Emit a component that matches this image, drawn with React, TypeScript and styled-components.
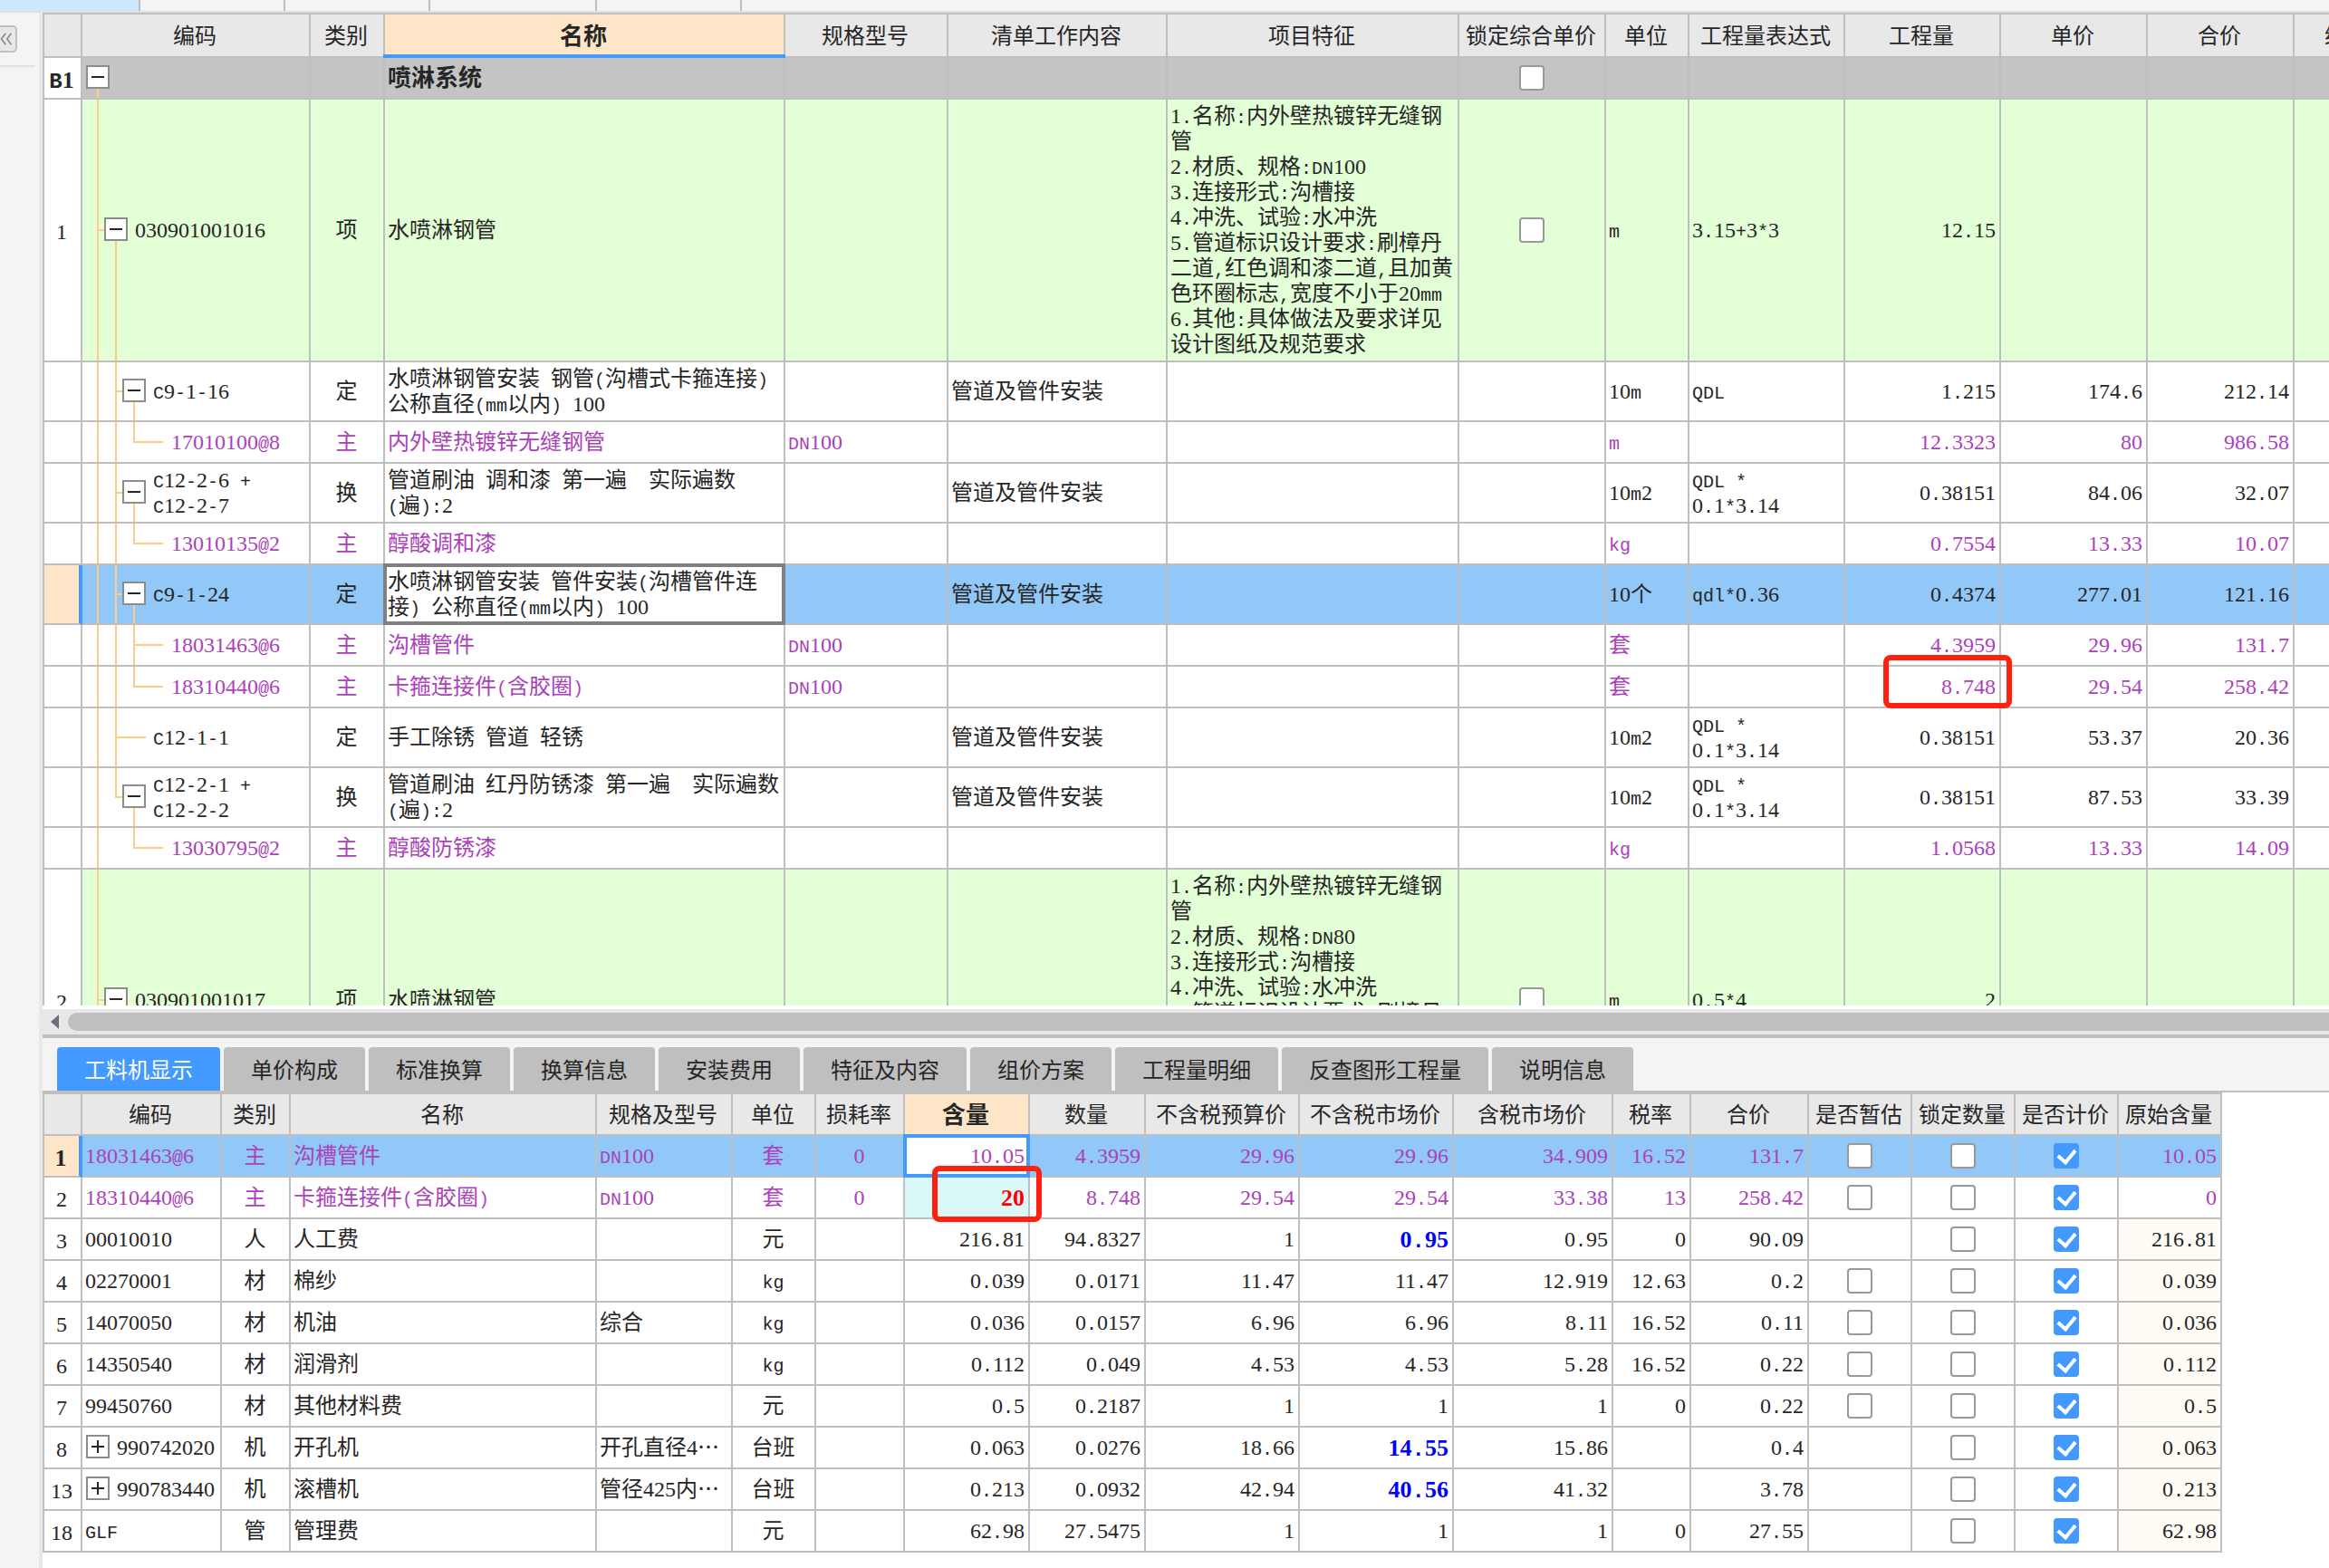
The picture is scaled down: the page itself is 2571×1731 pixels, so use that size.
import React from "react";
import styled, { createGlobalStyle, css } from "styled-components";

const c = {
  line: "#bfbfbf",
  soft: "#e0e0e0",
  panel: "#f4f4f4",
  head: "#e8e8e8",
  peach: "#ffe6c8",
  blue: "#4499ff",
  selected: "#92c8f7",
  green: "#e2ffd6",
  group: "#c4c4c4",
  purple: "#aa42ba",
  text: "#262626",
  guide: "#ffcc85",
  red: "#ff2010",
};

const GlobalStyle = createGlobalStyle`
  * { box-sizing: border-box; }
  body { margin: 0; background: #fff; overflow: hidden; }
  button { font: inherit; color: inherit; }
`;

const Page = styled.div`
  display: flex;
  flex-direction: column;
  height: 100vh;
  color: ${c.text};
  font: 24px/28px "Noto Sans CJK SC", sans-serif;
`;

/* ---------- frame ---------- */

const TopStrip = styled.div`
  display: flex;
  flex: none;
  height: 14px;
  background: ${c.panel};
  border-bottom: 2px solid ${c.soft};
`;

const StripTab = styled.div<{ $width: number; $active?: boolean }>`
  width: ${(p) => p.$width}px;
  border-right: 2px solid ${c.line};
  background: ${(p) => (p.$active ? "#cce8ff" : "transparent")};
`;

const Body = styled.div`
  display: flex;
  flex: 1;
  min-height: 0;
`;

const Rail = styled.aside`
  flex: none;
  width: 47px;
  background: ${c.panel};
  border-right: 4px solid ${c.head};
`;

const RailTop = styled.div`
  width: 39px;
  height: 60px;
  padding-top: 14px;
  border-bottom: 2px solid ${c.soft};
`;

const CollapseButton = styled.button`
  display: flex;
  align-items: center;
  justify-content: flex-end;
  width: 19px;
  height: 30px;
  padding: 0 3px 0 0;
  overflow: hidden;
  background: ${c.head};
  border: 2px solid ${c.line};
  border-left: 0;
  border-radius: 0 5px 5px 0;
`;

const Main = styled.main`
  display: flex;
  flex: 1;
  flex-direction: column;
  min-width: 0;
`;

const BillPane = styled.section`
  flex: 1;
  min-height: 0;
  overflow: hidden;
  border-bottom: 4px solid #fff;
`;

const ScrollBar = styled.div`
  display: flex;
  flex: none;
  align-items: center;
  gap: 10px;
  height: 32px;
  padding-left: 9px;
  overflow: hidden;
  background: ${c.head};
  border-bottom: 4px solid ${c.line};
`;

const ScrollArrow = styled.button`
  flex: none;
  width: 9px;
  height: 16px;
  padding: 0;
  border: 0;
  background: #6e6e78;
  clip-path: polygon(100% 0, 100% 100%, 0 50%);
`;

const ScrollThumb = styled.div`
  flex: 1;
  height: 20px;
  background: ${c.line};
  border-radius: 10px 0 0 10px;
`;

const DetailPane = styled.section`
  flex: none;
  padding: 10px 0 17px;
  overflow: hidden;
  background: linear-gradient(${c.panel} 60px, #fff 60px);
`;

const TabList = styled.div`
  display: flex;
  gap: 4px;
  padding-left: 16px;
  border-bottom: 2px solid ${c.line};
`;

const Tab = styled.button<{ $active: boolean }>`
  height: 48px;
  padding: 0 30px;
  border: 0;
  border-radius: 4px 4px 0 0;
  white-space: nowrap;
  color: ${(p) => (p.$active ? "#fff" : c.text)};
  background: ${(p) => (p.$active ? c.blue : c.line)};
`;

/* ---------- grid ---------- */

const Grid = styled.table`
  width: 0;
  table-layout: fixed;
  border-collapse: separate;
  border-spacing: 0;
  border-left: 2px solid ${c.line};
  border-top: 2px solid ${c.line};
`;

const HeadCell = styled.th<{ $active?: boolean; $rule?: boolean; $height: number }>`
  position: relative;
  height: ${(p) => p.$height}px;
  padding: 0 2px 2px 0;
  white-space: nowrap;
  font-size: ${(p) => (p.$active ? 26 : 24)}px;
  font-weight: ${(p) => (p.$active ? 700 : 400)};
  background: ${(p) => (p.$active ? c.peach : c.head)};
  border-right: 2px solid ${c.line};
  border-bottom: 2px solid ${c.line};
  ${(p) =>
    p.$rule &&
    css`
      &::after {
        content: "";
        position: absolute;
        inset: auto -2px -2px;
        height: 4px;
        background: ${c.blue};
      }
    `}
`;

type Tone = "group" | "item" | "plain" | "main" | "selected" | "selectedMain";

const rowBack: Record<Tone, string> = {
  group: c.group,
  item: c.green,
  plain: "#fff",
  main: "#fff",
  selected: c.selected,
  selectedMain: c.selected,
};

const Row = styled.tr<{ $tone: Tone; $height: number }>`
  height: ${(p) => p.$height}px;
  background-color: ${(p) => rowBack[p.$tone]};
  color: ${(p) => (p.$tone === "main" || p.$tone === "selectedMain" ? c.purple : c.text)};
`;

const RowHead = styled.th<{ $current?: boolean; $bold?: boolean }>`
  padding: 0 2px 0 0;
  color: ${c.text};
  font-size: ${(p) => (p.$bold ? 26 : 24)}px;
  font-weight: ${(p) => (p.$bold ? 700 : 400)};
  background: ${(p) => (p.$current ? c.peach : "#fff")};
  border-right: ${(p) => (p.$current ? `4px solid ${c.blue}` : `2px solid ${c.line}`)};
  border-bottom: 2px solid ${c.line};
`;

type Align = "left" | "center" | "right";

const Cell = styled.td<{
  $align?: Align;
  $back?: string;
  $ink?: string;
  $bold?: boolean;
  $focus?: string;
  $top?: boolean;
}>`
  position: relative;
  padding: 2px 4px 6px 3px;
  white-space: pre;
  vertical-align: ${(p) => (p.$top ? "top" : "middle")};
  text-align: ${(p) => p.$align || "left"};
  border-right: 2px solid ${c.line};
  border-bottom: 2px solid ${c.line};
  ${(p) => p.$back && `background-color: ${p.$back};`}
  ${(p) => p.$ink && `color: ${p.$ink};`}
  ${(p) => p.$bold && "font-size: 26px; font-weight: 700;"}
  ${(p) =>
    p.$focus &&
    css`
      background-color: #fff;
      &::after {
        content: "";
        position: absolute;
        inset: -2px;
        border: 4px solid ${p.$focus};
      }
    `}
`;

const CheckCell = styled(Cell)`
  padding: 0;
  line-height: 0;
`;

const Guided = styled(Cell)<{ $layers: string }>`
  padding-left: 0;
  padding-right: 0;
  background: ${(p) => p.$layers};
`;

const CodeBox = styled.div<{ $indent: number }>`
  display: flex;
  align-items: center;
  gap: 8px;
  padding-left: ${(p) => p.$indent}px;
`;

const Toggle = styled.button<{ $open: boolean }>`
  flex: none;
  width: 26px;
  height: 26px;
  margin: 2px 0 0;
  padding: 0;
  border: 2px solid #8c8c8c;
  background: linear-gradient(${c.text}, ${c.text}) center / 14px 2px no-repeat,
    ${(p) => (p.$open ? "" : `linear-gradient(${c.text}, ${c.text}) center / 2px 14px no-repeat,`)}
    #fff;
`;

const Check = styled.input`
  appearance: none;
  display: inline-grid;
  place-items: center;
  width: 28px;
  height: 28px;
  margin: 0;
  background: #fff;
  border: 2px solid #999;
  border-radius: 4px;
  &:checked {
    background: ${c.blue};
    border-color: ${c.blue};
  }
  &:checked::after {
    content: "";
    width: 9px;
    height: 15px;
    margin-bottom: 4px;
    border: solid #fff;
    border-width: 0 4px 4px 0;
    transform: rotate(40deg);
  }
`;

const Mark = styled.span<{ $inset: string }>`
  position: absolute;
  z-index: 1;
  inset: ${(p) => p.$inset};
  border: 6px solid ${c.red};
  border-radius: 8px;
  pointer-events: none;
`;

/* Digits and Latin signs take half the width of a Chinese character. */
const Digits = styled.span`
  font-family: "Liberation Serif", serif;
  line-height: 0;
`;

const Latin = styled.span<{ $bold?: boolean }>`
  font-family: "Liberation Mono", monospace;
  font-size: ${(p) => (p.$bold ? 24 : 20)}px;
  line-height: 0;
`;

function Text({ value, bold }: { value: string; bold?: boolean }) {
  const runs = value.match(/\d+|\n|[\x20-\x2f\x3a-\x7e]+|[^\x00-\x7e]+/g) || [];
  return (
    <>
      {runs.map((run, i) => {
        if (/^\d/.test(run)) return <Digits key={i}>{run}</Digits>;
        if (/^[\x20-\x7e]/.test(run)) return <Latin key={i} $bold={bold}>{run}</Latin>;
        return <React.Fragment key={i}>{run}</React.Fragment>;
      })}
    </>
  );
}

/* ---------- tree guides ---------- */

type Part = "full" | "top" | "bottom";
type Guide = [number, Part];

function guideLayers(guides: Guide[], stub?: [number, number]) {
  const ink = `linear-gradient(${c.guide}, ${c.guide})`;
  const layers = guides.map(([level, part]) => {
    const x = 16 + level * 20;
    const y = part === "bottom" ? "100%" : "0";
    return `${ink} ${x}px ${y} / 2px ${part === "full" ? "100%" : "50%"} no-repeat`;
  });
  if (stub) layers.push(`${ink} ${16 + stub[0] * 20}px 50% / ${stub[1]}px 2px no-repeat`);
  return layers.join(", ");
}

interface Bill {
  no?: string;
  code?: string;
  level: number;
  toggle?: boolean;
  guides: Guide[];
  stub?: [number, number];
  tone: Tone;
  height: number;
  kind?: string;
  name: string;
  spec?: string;
  work?: string;
  feature?: string;
  lock?: boolean;
  unit?: string;
  expr?: string;
  qty?: string;
  price?: string;
  total?: string;
  marked?: boolean;
}

const work = "管道及管件安装";
const branch: Guide[] = [[0, "full"], [1, "full"], [2, "bottom"]];
const leafEnd: Guide[] = [[0, "full"], [1, "full"], [2, "top"]];

const bills: Bill[] = [
  { no: "B1", level: 0, toggle: true, guides: [[0, "bottom"]], tone: "group", height: 46, name: "喷淋系统", lock: true },
  { no: "1", code: "030901001016", level: 1, toggle: true, guides: [[0, "full"], [1, "bottom"]], stub: [0, 10], tone: "item", height: 290, kind: "项", name: "水喷淋钢管", feature: "1.名称:内外壁热镀锌无缝钢\n管\n2.材质、规格:DN100\n3.连接形式:沟槽接\n4.冲洗、试验:水冲洗\n5.管道标识设计要求:刷樟丹\n二道,红色调和漆二道,且加黄\n色环圈标志,宽度不小于20mm\n6.其他:具体做法及要求详见\n设计图纸及规范要求", lock: true, unit: "m", expr: "3.15+3*3", qty: "12.15" },
  { code: "C9-1-16", level: 2, toggle: true, guides: branch, stub: [1, 10], tone: "plain", height: 66, kind: "定", name: "水喷淋钢管安装 钢管(沟槽式卡箍连接)\n公称直径(mm以内) 100", work, unit: "10m", expr: "QDL", qty: "1.215", price: "174.6", total: "212.14" },
  { code: "17010100@8", level: 3, guides: leafEnd, stub: [2, 33], tone: "main", height: 46, kind: "主", name: "内外壁热镀锌无缝钢管", spec: "DN100", unit: "m", qty: "12.3323", price: "80", total: "986.58" },
  { code: "C12-2-6 +\nC12-2-7", level: 2, toggle: true, guides: branch, stub: [1, 10], tone: "plain", height: 66, kind: "换", name: "管道刷油 调和漆 第一遍  实际遍数\n(遍):2", work, unit: "10m2", expr: "QDL *\n0.1*3.14", qty: "0.38151", price: "84.06", total: "32.07" },
  { code: "13010135@2", level: 3, guides: leafEnd, stub: [2, 33], tone: "main", height: 46, kind: "主", name: "醇酸调和漆", unit: "kg", qty: "0.7554", price: "13.33", total: "10.07" },
  { code: "C9-1-24", level: 2, toggle: true, guides: branch, stub: [1, 10], tone: "selected", height: 66, kind: "定", name: "水喷淋钢管安装 管件安装(沟槽管件连\n接) 公称直径(mm以内) 100", work, unit: "10个", expr: "qdl*0.36", qty: "0.4374", price: "277.01", total: "121.16" },
  { code: "18031463@6", level: 3, guides: [[0, "full"], [1, "full"], [2, "full"]], stub: [2, 33], tone: "main", height: 46, kind: "主", name: "沟槽管件", spec: "DN100", unit: "套", qty: "4.3959", price: "29.96", total: "131.7" },
  { code: "18310440@6", level: 3, guides: leafEnd, stub: [2, 33], tone: "main", height: 46, kind: "主", name: "卡箍连接件(含胶圈)", spec: "DN100", unit: "套", qty: "8.748", price: "29.54", total: "258.42", marked: true },
  { code: "C12-1-1", level: 2, guides: [[0, "full"], [1, "full"]], stub: [1, 34], tone: "plain", height: 66, kind: "定", name: "手工除锈 管道 轻锈", work, unit: "10m2", expr: "QDL *\n0.1*3.14", qty: "0.38151", price: "53.37", total: "20.36" },
  { code: "C12-2-1 +\nC12-2-2", level: 2, toggle: true, guides: [[0, "full"], [1, "top"], [2, "bottom"]], stub: [1, 10], tone: "plain", height: 66, kind: "换", name: "管道刷油 红丹防锈漆 第一遍  实际遍数\n(遍):2", work, unit: "10m2", expr: "QDL *\n0.1*3.14", qty: "0.38151", price: "87.53", total: "33.39" },
  { code: "13030795@2", level: 3, guides: [[0, "full"], [2, "top"]], stub: [2, 33], tone: "main", height: 46, kind: "主", name: "醇酸防锈漆", unit: "kg", qty: "1.0568", price: "13.33", total: "14.09" },
  { no: "2", code: "030901001017", level: 1, toggle: true, guides: [[0, "full"], [1, "bottom"]], stub: [0, 10], tone: "item", height: 290, kind: "项", name: "水喷淋钢管", feature: "1.名称:内外壁热镀锌无缝钢\n管\n2.材质、规格:DN80\n3.连接形式:沟槽接\n4.冲洗、试验:水冲洗\n5.管道标识设计要求:刷樟丹", lock: true, unit: "m", expr: "0.5*4", qty: "2" },
];

const billColumns: [string, number][] = [
  ["", 42], ["编码", 252], ["类别", 82], ["名称", 442], ["规格型号", 180], ["清单工作内容", 242],
  ["项目特征", 322], ["锁定综合单价", 162], ["单位", 92], ["工程量表达式", 172], ["工程量", 172],
  ["单价", 162], ["合价", 162], ["综合合价", 166],
];

function Columns({ columns }: { columns: [string, number][] }) {
  return (
    <colgroup>
      {columns.map(([label, width]) => (
        <col key={label} width={width} />
      ))}
    </colgroup>
  );
}

function BillGrid() {
  return (
    <Grid>
      <Columns columns={billColumns} />
      <thead>
        <tr>
          {billColumns.map(([label]) => (
            <HeadCell key={label} scope="col" $height={48} $active={label === "名称"} $rule={label === "名称"}>
              {label}
            </HeadCell>
          ))}
        </tr>
      </thead>
      <tbody>
        {bills.map((b, i) => {
          const group = b.tone === "group";
          const indent = b.toggle ? 4 + b.level * 20 : 38 + b.level * 20;
          return (
            <Row key={i} $tone={b.tone} $height={b.height}>
              <RowHead scope="row" $bold={group} $current={b.tone === "selected"}>
                <Text value={b.no || ""} bold={group} />
              </RowHead>
              <Guided $layers={guideLayers(b.guides, b.stub)}>
                <CodeBox $indent={indent}>
                  {b.toggle && <Toggle type="button" $open aria-label={`折叠 ${b.code || b.name}`} />}
                  <span>
                    <Text value={b.code || ""} />
                  </span>
                </CodeBox>
              </Guided>
              <Cell $align="center">{b.kind}</Cell>
              <Cell $bold={group} $focus={b.tone === "selected" ? "#808080" : undefined}>
                <Text value={b.name} />
              </Cell>
              <Cell><Text value={b.spec || ""} /></Cell>
              <Cell>{b.work}</Cell>
              <Cell $top><Text value={b.feature || ""} /></Cell>
              <CheckCell $align="center">
                {b.lock && <Check type="checkbox" aria-label={`锁定综合单价 ${b.name}`} />}
              </CheckCell>
              <Cell><Text value={b.unit || ""} /></Cell>
              <Cell><Text value={b.expr || ""} /></Cell>
              <Cell $align="right">
                <Text value={b.qty || ""} />
                {b.marked && <Mark $inset="-13px -14px -2px 42px" />}
              </Cell>
              <Cell $align="right"><Text value={b.price || ""} /></Cell>
              <Cell $align="right"><Text value={b.total || ""} /></Cell>
              <Cell />
            </Row>
          );
        })}
      </tbody>
    </Grid>
  );
}

/* ---------- resources ---------- */

interface Resource {
  no: string;
  code: string;
  fold?: boolean;
  kind: string;
  name: string;
  spec: string;
  unit: string;
  loss: string;
  nums: string[];
  priceChanged?: boolean;
  estimate?: boolean;
  origin: string;
}

const resources: Resource[] = [
  { no: "1", code: "18031463@6", kind: "主", name: "沟槽管件", spec: "DN100", unit: "套", loss: "0", nums: ["10.05", "4.3959", "29.96", "29.96", "34.909", "16.52", "131.7"], estimate: true, origin: "10.05" },
  { no: "2", code: "18310440@6", kind: "主", name: "卡箍连接件(含胶圈)", spec: "DN100", unit: "套", loss: "0", nums: ["20", "8.748", "29.54", "29.54", "33.38", "13", "258.42"], estimate: true, origin: "0" },
  { no: "3", code: "00010010", kind: "人", name: "人工费", spec: "", unit: "元", loss: "", nums: ["216.81", "94.8327", "1", "0.95", "0.95", "0", "90.09"], priceChanged: true, origin: "216.81" },
  { no: "4", code: "02270001", kind: "材", name: "棉纱", spec: "", unit: "kg", loss: "", nums: ["0.039", "0.0171", "11.47", "11.47", "12.919", "12.63", "0.2"], estimate: true, origin: "0.039" },
  { no: "5", code: "14070050", kind: "材", name: "机油", spec: "综合", unit: "kg", loss: "", nums: ["0.036", "0.0157", "6.96", "6.96", "8.11", "16.52", "0.11"], estimate: true, origin: "0.036" },
  { no: "6", code: "14350540", kind: "材", name: "润滑剂", spec: "", unit: "kg", loss: "", nums: ["0.112", "0.049", "4.53", "4.53", "5.28", "16.52", "0.22"], estimate: true, origin: "0.112" },
  { no: "7", code: "99450760", kind: "材", name: "其他材料费", spec: "", unit: "元", loss: "", nums: ["0.5", "0.2187", "1", "1", "1", "0", "0.22"], estimate: true, origin: "0.5" },
  { no: "8", code: "990742020", fold: true, kind: "机", name: "开孔机", spec: "开孔直径4…", unit: "台班", loss: "", nums: ["0.063", "0.0276", "18.66", "14.55", "15.86", "", "0.4"], priceChanged: true, origin: "0.063" },
  { no: "13", code: "990783440", fold: true, kind: "机", name: "滚槽机", spec: "管径425内…", unit: "台班", loss: "", nums: ["0.213", "0.0932", "42.94", "40.56", "41.32", "", "3.78"], priceChanged: true, origin: "0.213" },
  { no: "18", code: "GLF", kind: "管", name: "管理费", spec: "", unit: "元", loss: "", nums: ["62.98", "27.5475", "1", "1", "1", "0", "27.55"], origin: "62.98" },
];

const resourceColumns: [string, number][] = [
  ["", 42], ["编码", 154], ["类别", 76], ["名称", 338], ["规格及型号", 150], ["单位", 92], ["损耗率", 98],
  ["含量", 138], ["数量", 128], ["不含税预算价", 170], ["不含税市场价", 170], ["含税市场价", 176],
  ["税率", 86], ["合价", 130], ["是否暂估", 114], ["锁定数量", 114], ["是否计价", 114], ["原始含量", 114],
];

function AmountCell({ value, row, column }: { value: string; row: number; column: number }) {
  if (column === 0 && row === 0) {
    return (
      <Cell $align="right" $focus={c.blue}>
        <Text value={value} />
      </Cell>
    );
  }
  if (column === 0 && row === 1) {
    return (
      <Cell $align="right" $back="#dbf8f8" $ink="#ff0000" $bold>
        <Text value={value} bold />
        <Mark $inset="-13px -15px -5px 30px" />
      </Cell>
    );
  }
  const changed = column === 3 && resources[row].priceChanged;
  return (
    <Cell $align="right" $bold={changed} $ink={changed ? "#0000ff" : undefined}>
      <Text value={value} bold={changed} />
    </Cell>
  );
}

function ResourceGrid() {
  return (
    <Grid>
      <Columns columns={resourceColumns} />
      <thead>
        <tr>
          {resourceColumns.map(([label]) => (
            <HeadCell key={label} scope="col" $height={46} $active={label === "含量"}>
              {label}
            </HeadCell>
          ))}
        </tr>
      </thead>
      <tbody>
        {resources.map((r, i) => (
          <Row key={r.no} $tone={i === 0 ? "selectedMain" : i === 1 ? "main" : "plain"} $height={46}>
            <RowHead scope="row" $current={i === 0} $bold={i === 0}>
              <Text value={r.no} />
            </RowHead>
            <Cell>
              {r.fold ? (
                <CodeBox $indent={1}>
                  <Toggle type="button" $open={false} aria-label={`展开 ${r.name}`} />
                  <span>
                    <Text value={r.code} />
                  </span>
                </CodeBox>
              ) : (
                <Text value={r.code} />
              )}
            </Cell>
            <Cell $align="center">{r.kind}</Cell>
            <Cell><Text value={r.name} /></Cell>
            <Cell><Text value={r.spec} /></Cell>
            <Cell $align="center"><Text value={r.unit} /></Cell>
            <Cell $align="center"><Text value={r.loss} /></Cell>
            {r.nums.map((value, column) => (
              <AmountCell key={column} value={value} row={i} column={column} />
            ))}
            <CheckCell $align="center">
              {r.estimate && <Check type="checkbox" aria-label={`是否暂估 ${r.name}`} />}
            </CheckCell>
            <CheckCell $align="center">
              <Check type="checkbox" aria-label={`锁定数量 ${r.name}`} />
            </CheckCell>
            <CheckCell $align="center">
              <Check type="checkbox" defaultChecked aria-label={`是否计价 ${r.name}`} />
            </CheckCell>
            <Cell $align="right" $back={i > 1 ? "#fffcf6" : undefined}>
              <Text value={r.origin} />
            </Cell>
          </Row>
        ))}
      </tbody>
    </Grid>
  );
}

const tabs = [
  "工料机显示", "单价构成", "标准换算", "换算信息", "安装费用",
  "特征及内容", "组价方案", "工程量明细", "反查图形工程量", "说明信息",
];

export default function App() {
  return (
    <Page>
      <GlobalStyle />
      <TopStrip>
        <StripTab $width={155} $active />
        <StripTab $width={160} />
        <StripTab $width={160} />
        <StripTab $width={184} />
        <StripTab $width={160} />
      </TopStrip>
      <Body>
        <Rail>
          <RailTop>
            <CollapseButton type="button" aria-label="展开侧栏">
              <svg width="18" height="20" viewBox="0 0 18 20" fill="none" stroke="#888" strokeWidth="2">
                <path d="M8 2 L2 10 L8 18 M16 2 L10 10 L16 18" />
              </svg>
            </CollapseButton>
          </RailTop>
        </Rail>
        <Main>
          <BillPane>
            <BillGrid />
          </BillPane>
          <ScrollBar>
            <ScrollArrow type="button" aria-label="向左滚动" />
            <ScrollThumb />
          </ScrollBar>
          <DetailPane>
            <TabList role="tablist">
              {tabs.map((label, i) => (
                <Tab key={label} type="button" role="tab" aria-selected={i === 0} $active={i === 0}>
                  {label}
                </Tab>
              ))}
            </TabList>
            <ResourceGrid />
          </DetailPane>
        </Main>
      </Body>
    </Page>
  );
}
